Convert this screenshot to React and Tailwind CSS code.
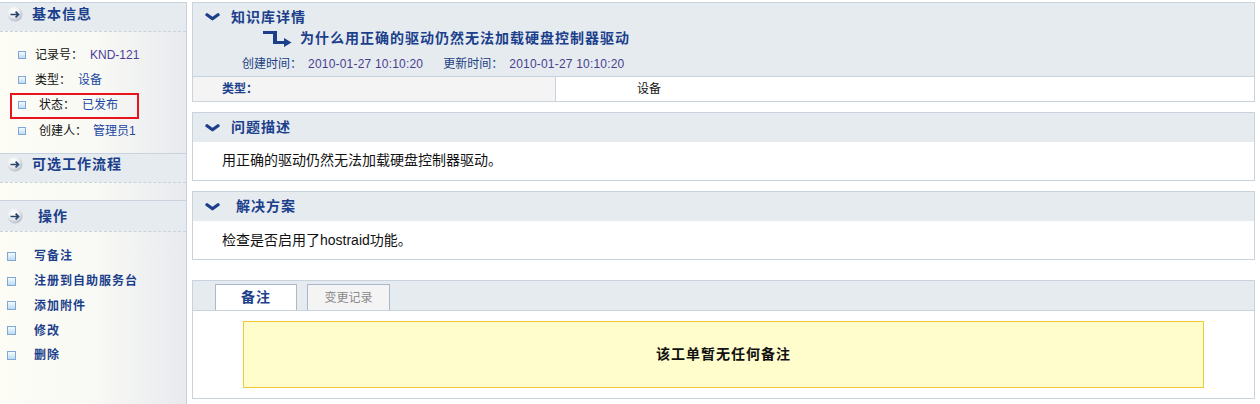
import React from "react";

function CircleArrow() {
  return (
    <svg width="16" height="16" viewBox="0 0 16 16" className="shrink-0">
      <defs>
        <radialGradient id="caGrad" cx="38%" cy="32%" r="72%">
          <stop offset="0%" stopColor="#ffffff" />
          <stop offset="50%" stopColor="#eceef2" />
          <stop offset="100%" stopColor="#b3bbc6" />
        </radialGradient>
      </defs>
      <circle cx="8" cy="8" r="7.6" fill="url(#caGrad)" />
      <path d="M3.5 8.5 H11.5 M8.6 5.6 L11.5 8.5 L8.6 11.4" stroke="#24446c" strokeWidth="1.7" fill="none" />
    </svg>
  );
}

function Chevron() {
  return (
    <svg width="15" height="8" viewBox="0 0 15 8" className="shrink-0">
      <path d="M2 1.8 L7.5 5.8 L13 1.8" stroke="#1c3f8c" strokeWidth="3.2" strokeLinecap="round" strokeLinejoin="round" fill="none" />
    </svg>
  );
}

function ReturnArrow() {
  return (
    <svg width="29" height="17" viewBox="0 0 29 17" className="shrink-0">
      <path d="M0 1 H14 V11 H22 V14 H10 V4 H0 Z" fill="#1c3f8c" />
      <path d="M21 8 L28.5 12.5 L21 17 Z" fill="#1c3f8c" />
    </svg>
  );
}

function Sq({ big }) {
  return (
    <span
      className={`${big ? "w-[9px] h-[9px]" : "w-[8px] h-[8px]"} shrink-0 border border-[#7fa8d6] bg-linear-to-b from-[#f6fbfe] to-[#bddbf1]`}
    />
  );
}

function SideHeader({ title, contentClass, textClass }) {
  return (
    <div>
      <div className={`border-t border-[#c9d3de] bg-[#e6ebf0] flex items-center pl-[7px] ${contentClass}`}>
        <CircleArrow />
        <span className={`text-[14px] font-bold tracking-[1px] text-[#1b3f8b] ${textClass}`}>{title}</span>
      </div>
      <div className="border-t border-dashed border-[#c9d3de]" />
    </div>
  );
}

function PanelHeader({ title, textClass }) {
  return (
    <div className="h-[29px] bg-[#e6ebf0] flex items-center pl-[12px]">
      <Chevron />
      <span className={`text-[14px] font-bold tracking-[1px] text-[#1b3f8b] ${textClass}`}>{title}</span>
    </div>
  );
}

export default function App() {
  const ops = ["写备注", "注册到自助服务台", "添加附件", "修改", "删除"];
  return (
    <div className="w-[1260px] h-[404px] overflow-hidden bg-white flex pt-[2px] font-['Liberation_Sans','Noto_Sans_CJK_SC',sans-serif] text-[#111]">
      <aside className="w-[187px] shrink-0 border-r border-[#c9d3de] bg-linear-to-r from-[#fdfdf6] via-[#f9f9f5] via-50% to-[#e8eaee] flex flex-col">
        <SideHeader title="基本信息" contentClass="h-[29px] pb-[6px] gap-[9px]" />
        <ul className="pt-[10px] pb-[11px] text-[12px]">
          <li className="h-[25px] flex items-center pl-[18px]">
            <Sq />
            <span className="ml-[9px]">记录号：</span>
            <span className="ml-[7px] text-[#4a3f96]">KND-121</span>
          </li>
          <li className="h-[25px] flex items-center pl-[18px]">
            <Sq />
            <span className="ml-[9px]">类型：</span>
            <span className="ml-[7px] text-[#2047a0]">设备</span>
          </li>
          <li className="mt-[1px] h-[26px] ml-[10px] w-[129px] border-2 border-[#e8141b] flex items-center pl-[6px] pb-[3px]">
            <Sq />
            <span className="ml-[13px]">状态：</span>
            <span className="ml-[7px] text-[#2047a0]">已发布</span>
          </li>
          <li className="h-[23px] flex items-center pl-[18px]">
            <Sq />
            <span className="ml-[13px]">创建人：</span>
            <span className="ml-[6px] text-[#2047a0]">管理员1</span>
          </li>
        </ul>
        <SideHeader title="可选工作流程" contentClass="h-[29px] pb-[8px] gap-[9px]" />
        <div className="h-[17px]" />
        <SideHeader title="操作" contentClass="h-[31px] gap-[15px]" />
        <ul className="pt-[12px]">
          {ops.map((o) => (
            <li key={o} className="h-[24.75px] flex items-center pl-[7px]">
              <Sq big />
              <span className="ml-[18px] text-[12px] font-bold tracking-[1px] text-[#1b3f8b]">{o}</span>
            </li>
          ))}
        </ul>
      </aside>

      <main className="flex-1 ml-[5px] mr-[5px] flex flex-col">
        <section className="border border-[#c9d3de]">
          <div className="h-[74px] bg-[#e6ebf0] border-b border-[#c9d3de] flex flex-col">
            <div className="mt-[4px] h-[20px] flex items-center pl-[12px]">
              <Chevron />
              <span className="ml-[11px] text-[14px] font-bold tracking-[1px] text-[#1b3f8b]">知识库详情</span>
            </div>
            <div className="h-[22px] flex items-center pl-[70px]">
              <ReturnArrow />
              <span className="ml-[8px] text-[14px] font-bold tracking-[1px] text-[#1b3f8b]">
                为什么用正确的驱动仍然无法加载硬盘控制器驱动
              </span>
            </div>
            <div className="mt-[7px] h-[16px] flex items-center pl-[49px] text-[12px]">
              <span className="text-[#213f80]">创建时间：</span>
              <span className="ml-[6px] text-[#4a3f8f] tracking-[0.2px]">2010-01-27 10:10:20</span>
              <span className="ml-[20px] text-[#213f80]">更新时间：</span>
              <span className="ml-[6px] text-[#4a3f8f] tracking-[0.2px]">2010-01-27 10:10:20</span>
            </div>
          </div>
          <div className="flex h-[24px] text-[12px]">
            <div className="w-[363px] bg-[#f4f4f4] border-r border-[#c9d3de] pl-[29px] flex items-center font-bold text-[#1b3f8b]">
              类型：
            </div>
            <div className="flex-1 pl-[81px] flex items-center">设备</div>
          </div>
        </section>

        <section className="mt-[10px] border border-[#c9d3de]">
          <PanelHeader title="问题描述" textClass="ml-[11px]" />
          <div className="h-[38px] pl-[29px] pt-[9px] text-[14px] leading-[18px]">
            用正确的驱动仍然无法加载硬盘控制器驱动。
          </div>
        </section>

        <section className="mt-[10px] border border-[#c9d3de]">
          <PanelHeader title="解决方案" textClass="ml-[16px]" />
          <div className="h-[38px] pl-[29px] pt-[10px] text-[14px] leading-[18px]">
            检查是否启用了hostraid功能。
          </div>
        </section>

        <section className="mt-[20px] border border-[#c9d3de]">
          <div className="h-[30px] bg-[#e6ebf0] border-b border-[#c9d3de] flex items-end pl-[22px] gap-[10px]">
            <div className="w-[82px] h-[26px] bg-white border border-b-0 border-[#a9b8cb] flex items-center justify-center text-[14px] font-bold tracking-[1px] text-[#1b3f8b]">
              备注
            </div>
            <div className="w-[83px] h-[26px] bg-[#f4f4f4] border border-b-0 border-[#a9b8cb] flex items-center justify-center text-[12px] text-[#8a8a8a]">
              变更记录
            </div>
          </div>
          <div className="h-[87px] px-[50px] py-[10px]">
            <div className="h-[67px] border border-[#eecb36] bg-[#fffdcc] flex items-center justify-center text-[14px] font-bold tracking-[1px] text-[#111]">
              该工单暂无任何备注
            </div>
          </div>
        </section>
      </main>
    </div>
  );
}
